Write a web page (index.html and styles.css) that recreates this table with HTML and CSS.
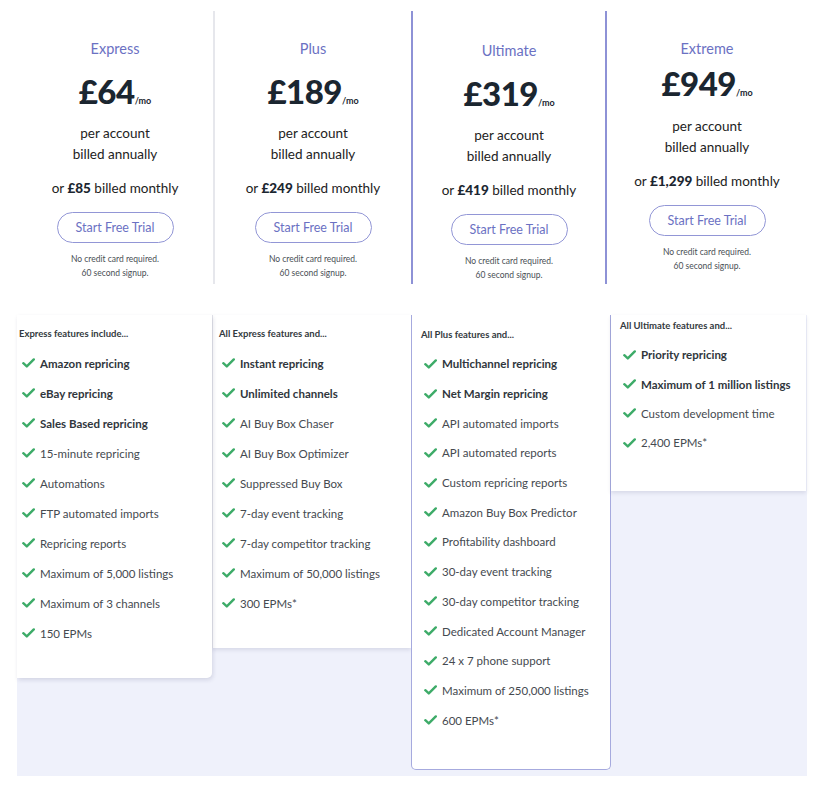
FILE: index.html
```html
<!DOCTYPE html>
<html>
<head>
<meta charset="utf-8">
<link rel="stylesheet" href="styles.css">
</head>
<body>
<div class="page">
  <div class="tiers">
    <div class="tier tier-1">
      <div class="tier-name">Express</div>
      <div class="price">£64<span class="per">/mo</span></div>
      <div class="terms">per account<br>billed annually</div>
      <div class="monthly">or <b>£85</b> billed monthly</div>
      <a class="trial">Start Free Trial</a>
      <div class="note">No credit card required.<br>60 second signup.</div>
    </div>
    <div class="tier tier-2">
      <div class="tier-name">Plus</div>
      <div class="price">£189<span class="per">/mo</span></div>
      <div class="terms">per account<br>billed annually</div>
      <div class="monthly">or <b>£249</b> billed monthly</div>
      <a class="trial">Start Free Trial</a>
      <div class="note">No credit card required.<br>60 second signup.</div>
    </div>
    <div class="tier tier-3">
      <div class="tier-name">Ultimate</div>
      <div class="price">£319<span class="per">/mo</span></div>
      <div class="terms">per account<br>billed annually</div>
      <div class="monthly">or <b>£419</b> billed monthly</div>
      <a class="trial">Start Free Trial</a>
      <div class="note">No credit card required.<br>60 second signup.</div>
    </div>
    <div class="tier tier-4">
      <div class="tier-name">Extreme</div>
      <div class="price">£949<span class="per">/mo</span></div>
      <div class="terms">per account<br>billed annually</div>
      <div class="monthly">or <b>£1,299</b> billed monthly</div>
      <a class="trial">Start Free Trial</a>
      <div class="note">No credit card required.<br>60 second signup.</div>
    </div>
  </div>

  <div class="features">
    <div class="card card-1">
      <div class="card-head">Express features include...</div>
      <ul class="list">
        <li class="strong"><svg class="tick" viewBox="0 0 13 10"><path d="M1.3 5.2 4.8 8.4 11.8 1.4"/></svg>Amazon repricing</li>
        <li class="strong"><svg class="tick" viewBox="0 0 13 10"><path d="M1.3 5.2 4.8 8.4 11.8 1.4"/></svg>eBay repricing</li>
        <li class="strong"><svg class="tick" viewBox="0 0 13 10"><path d="M1.3 5.2 4.8 8.4 11.8 1.4"/></svg>Sales Based repricing</li>
        <li><svg class="tick" viewBox="0 0 13 10"><path d="M1.3 5.2 4.8 8.4 11.8 1.4"/></svg>15-minute repricing</li>
        <li><svg class="tick" viewBox="0 0 13 10"><path d="M1.3 5.2 4.8 8.4 11.8 1.4"/></svg>Automations</li>
        <li><svg class="tick" viewBox="0 0 13 10"><path d="M1.3 5.2 4.8 8.4 11.8 1.4"/></svg>FTP automated imports</li>
        <li><svg class="tick" viewBox="0 0 13 10"><path d="M1.3 5.2 4.8 8.4 11.8 1.4"/></svg>Repricing reports</li>
        <li><svg class="tick" viewBox="0 0 13 10"><path d="M1.3 5.2 4.8 8.4 11.8 1.4"/></svg>Maximum of 5,000 listings</li>
        <li><svg class="tick" viewBox="0 0 13 10"><path d="M1.3 5.2 4.8 8.4 11.8 1.4"/></svg>Maximum of 3 channels</li>
        <li><svg class="tick" viewBox="0 0 13 10"><path d="M1.3 5.2 4.8 8.4 11.8 1.4"/></svg>150 EPMs</li>
      </ul>
    </div>
    <div class="card card-2">
      <div class="card-head">All Express features and...</div>
      <ul class="list">
        <li class="strong"><svg class="tick" viewBox="0 0 13 10"><path d="M1.3 5.2 4.8 8.4 11.8 1.4"/></svg>Instant repricing</li>
        <li class="strong"><svg class="tick" viewBox="0 0 13 10"><path d="M1.3 5.2 4.8 8.4 11.8 1.4"/></svg>Unlimited channels</li>
        <li><svg class="tick" viewBox="0 0 13 10"><path d="M1.3 5.2 4.8 8.4 11.8 1.4"/></svg>AI Buy Box Chaser</li>
        <li><svg class="tick" viewBox="0 0 13 10"><path d="M1.3 5.2 4.8 8.4 11.8 1.4"/></svg>AI Buy Box Optimizer</li>
        <li><svg class="tick" viewBox="0 0 13 10"><path d="M1.3 5.2 4.8 8.4 11.8 1.4"/></svg>Suppressed Buy Box</li>
        <li><svg class="tick" viewBox="0 0 13 10"><path d="M1.3 5.2 4.8 8.4 11.8 1.4"/></svg>7-day event tracking</li>
        <li><svg class="tick" viewBox="0 0 13 10"><path d="M1.3 5.2 4.8 8.4 11.8 1.4"/></svg>7-day competitor tracking</li>
        <li><svg class="tick" viewBox="0 0 13 10"><path d="M1.3 5.2 4.8 8.4 11.8 1.4"/></svg>Maximum of 50,000 listings</li>
        <li><svg class="tick" viewBox="0 0 13 10"><path d="M1.3 5.2 4.8 8.4 11.8 1.4"/></svg>300 EPMs*</li>
      </ul>
    </div>
    <div class="card card-3">
      <div class="card-head">All Plus features and...</div>
      <ul class="list">
        <li class="strong"><svg class="tick" viewBox="0 0 13 10"><path d="M1.3 5.2 4.8 8.4 11.8 1.4"/></svg>Multichannel repricing</li>
        <li class="strong"><svg class="tick" viewBox="0 0 13 10"><path d="M1.3 5.2 4.8 8.4 11.8 1.4"/></svg>Net Margin repricing</li>
        <li><svg class="tick" viewBox="0 0 13 10"><path d="M1.3 5.2 4.8 8.4 11.8 1.4"/></svg>API automated imports</li>
        <li><svg class="tick" viewBox="0 0 13 10"><path d="M1.3 5.2 4.8 8.4 11.8 1.4"/></svg>API automated reports</li>
        <li><svg class="tick" viewBox="0 0 13 10"><path d="M1.3 5.2 4.8 8.4 11.8 1.4"/></svg>Custom repricing reports</li>
        <li><svg class="tick" viewBox="0 0 13 10"><path d="M1.3 5.2 4.8 8.4 11.8 1.4"/></svg>Amazon Buy Box Predictor</li>
        <li><svg class="tick" viewBox="0 0 13 10"><path d="M1.3 5.2 4.8 8.4 11.8 1.4"/></svg>Profitability dashboard</li>
        <li><svg class="tick" viewBox="0 0 13 10"><path d="M1.3 5.2 4.8 8.4 11.8 1.4"/></svg>30-day event tracking</li>
        <li><svg class="tick" viewBox="0 0 13 10"><path d="M1.3 5.2 4.8 8.4 11.8 1.4"/></svg>30-day competitor tracking</li>
        <li><svg class="tick" viewBox="0 0 13 10"><path d="M1.3 5.2 4.8 8.4 11.8 1.4"/></svg>Dedicated Account Manager</li>
        <li><svg class="tick" viewBox="0 0 13 10"><path d="M1.3 5.2 4.8 8.4 11.8 1.4"/></svg>24 x 7 phone support</li>
        <li><svg class="tick" viewBox="0 0 13 10"><path d="M1.3 5.2 4.8 8.4 11.8 1.4"/></svg>Maximum of 250,000 listings</li>
        <li><svg class="tick" viewBox="0 0 13 10"><path d="M1.3 5.2 4.8 8.4 11.8 1.4"/></svg>600 EPMs*</li>
      </ul>
    </div>
    <div class="card card-4">
      <div class="card-head">All Ultimate features and...</div>
      <ul class="list">
        <li class="strong"><svg class="tick" viewBox="0 0 13 10"><path d="M1.3 5.2 4.8 8.4 11.8 1.4"/></svg>Priority repricing</li>
        <li class="strong"><svg class="tick" viewBox="0 0 13 10"><path d="M1.3 5.2 4.8 8.4 11.8 1.4"/></svg>Maximum of 1 million listings</li>
        <li><svg class="tick" viewBox="0 0 13 10"><path d="M1.3 5.2 4.8 8.4 11.8 1.4"/></svg>Custom development time</li>
        <li><svg class="tick" viewBox="0 0 13 10"><path d="M1.3 5.2 4.8 8.4 11.8 1.4"/></svg>2,400 EPMs*</li>
      </ul>
    </div>
  </div>
</div>
</body>
</html>
```

FILE: styles.css
```css
* { box-sizing: border-box; }
html, body { margin: 0; padding: 0; background: #fff; }
body {
  font-family: "Lato", "Noto Sans", sans-serif;
  color: #1f2a33;
  -webkit-font-smoothing: antialiased;
}
.page {
  width: 826px;
  height: 790px;
  padding: 11px 19px 0 17px;
}

/* ---------- tier headers ---------- */
.tiers {
  display: flex;
  height: 273px;
}
.tier {
  display: flex;
  flex-direction: column;
  align-items: center;
  padding-top: 29px;
  text-align: center;
}
.tier > * { flex: none; }
.tier-1 { width: 196px; }
.tier-2 { width: 198px; border-left: 2px solid #e6e7ec; }
.tier-3 { width: 196px; border-left: 2px solid #8e92d6; border-right: 2px solid #8e92d6; padding-top: 31px; }
.tier-4 { width: 200px; }

.tier-name {
  font-size: 14.5px;
  line-height: 18px;
  color: #6b71c3;
}
.price {
  margin-top: 15px;
  font-size: 33px;
  line-height: 36px;
  font-weight: 900;
  color: #1b2630;
  letter-spacing: -0.5px;
}
.per {
  font-size: 9px;
  font-weight: 700;
  letter-spacing: 0;
}
.terms {
  margin-top: 4px;
  font-size: 13.5px;
  line-height: 21px;
  color: #222;
}
.monthly {
  margin-top: 13px;
  font-size: 13.5px;
  line-height: 21px;
  color: #222;
}
.monthly b { font-weight: 900; color: #1b2630; }
.trial {
  margin-top: 13px;
  width: 117px;
  height: 31px;
  border: 1px solid #9296d6;
  border-radius: 16px;
  display: flex;
  align-items: center;
  justify-content: center;
  font-size: 12.5px;
  color: #6b71c3;
}
.note {
  margin-top: 9px;
  font-size: 8.5px;
  line-height: 14px;
  color: #4a4f55;
}
.tier-4 .price { margin-top: 7px; }
.tier-4 .terms { margin-top: 5px; }

/* ---------- feature cards ---------- */
.features {
  margin-top: 31px;
  height: 461px;
  background: #eff1fb;
  display: flex;
  align-items: flex-start;
}
.card {
  background: #fff;
}
.card-1 {
  width: 195px;
  padding: 13px 0 30px 2px;
  border-bottom-right-radius: 5px;
  box-shadow: 1px 2px 4px rgba(40, 45, 90, 0.14);
  position: relative;
  z-index: 1;
}
.card-2 {
  width: 199px;
  padding: 13px 0 30px 6px;
  border-left: 1px solid #e3e4ea;
  box-shadow: 0 2px 4px rgba(40, 45, 90, 0.12);
}
.card-3 {
  width: 200px;
  padding: 14px 0 32px 9px;
  border: 1px solid #a6aade;
  border-top: none;
  border-radius: 0 0 5px 5px;
  height: 455px;
}
.card-4 {
  width: 195px;
  padding: 5px 0 33px 9px;
  box-shadow: 0 2px 4px rgba(40, 45, 90, 0.12);
}

.card-head {
  font-size: 9.5px;
  line-height: 12px;
  font-weight: 700;
  color: #333a40;
}
.list {
  list-style: none;
  margin: 8px 0 0;
  padding: 0;
}
.list li {
  height: 30px;
  display: flex;
  align-items: center;
  padding-left: 3px;
  font-size: 11.5px;
  color: #454a50;
}
.card-3 .list li { height: 29.7px; }
.card-4 .list li { height: 29.4px; }
.list li.strong { font-weight: 700; color: #30363c; }
.tick {
  width: 13px;
  height: 10px;
  margin-right: 5px;
  flex: none;
  fill: none;
  stroke: #3dab68;
  stroke-width: 2.4;
  stroke-linecap: round;
  stroke-linejoin: round;
}
```
